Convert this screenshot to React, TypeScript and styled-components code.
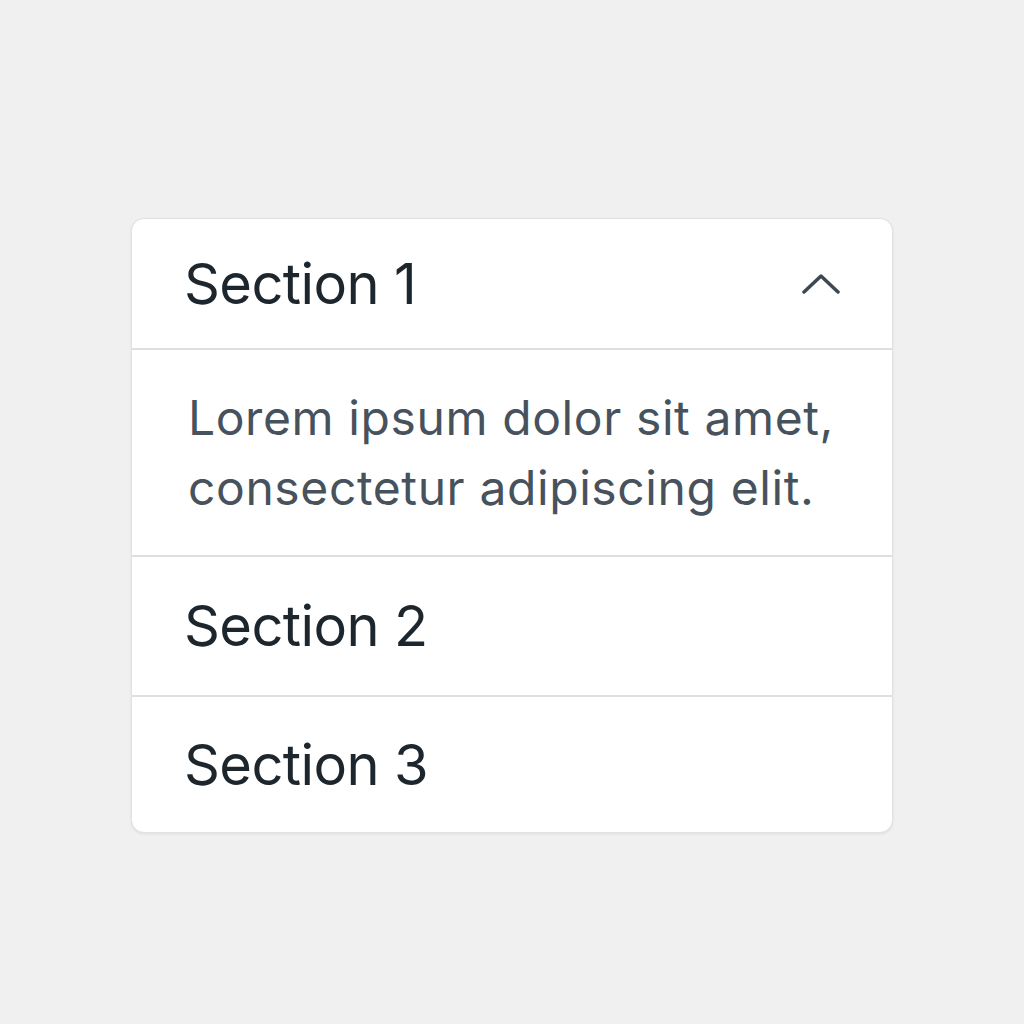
import React from "react";
import styled, { createGlobalStyle } from "styled-components";

const GlobalStyle = createGlobalStyle`
  html, body {
    margin: 0;
    padding: 0;
    background: #f0f0f0;
    font-family: Inter, "Noto Sans", "Liberation Sans", sans-serif;
  }
`;

type Section = { title: string; body?: string; height: number };

const sections: Section[] = [
  {
    title: "Section 1",
    body: "Lorem ipsum dolor sit amet, consectetur adipiscing elit.",
    height: 129,
  },
  { title: "Section 2", height: 138 },
  { title: "Section 3", height: 135 },
];

export default function App() {
  const [open, setOpen] = React.useState(0);

  return (
    <>
      <GlobalStyle />
      <Page>
        <Card>
          {sections.map((s, i) => (
            <Item key={s.title} last={i === sections.length - 1}>
              <Header tall={s.height} onClick={() => setOpen(open === i ? -1 : i)}>
                <Title>{s.title}</Title>
                {open === i && (
                  <svg width="38" height="22" viewBox="0 0 38 22" fill="none">
                    <path
                      d="M2 19 L19 3 L36 19"
                      stroke="#3f4851"
                      strokeWidth="3.5"
                      strokeLinecap="round"
                      strokeLinejoin="round"
                    />
                  </svg>
                )}
              </Header>
              {open === i && s.body && (
                <Panel>
                  <Body>{s.body}</Body>
                </Panel>
              )}
            </Item>
          ))}
        </Card>
      </Page>
    </>
  );
}

const Page = styled.div`
  width: 1024px;
  height: 1024px;
  box-sizing: border-box;
  padding-top: 218px;
  display: flex;
  justify-content: center;
  align-items: flex-start;
`;

const Card = styled.div`
  width: 762px;
  background: #ffffff;
  border-radius: 13px;
  border: 1px solid #e2e2e2;
  box-sizing: border-box;
  box-shadow: 0 1px 3px rgba(0, 0, 0, 0.08);
  overflow: hidden;
`;

const Item = styled.div<{ last: boolean }>`
  border-bottom: ${({ last }) => (last ? "none" : "2px solid #dedfe0")};
`;

const Header = styled.div<{ tall: number }>`
  height: ${({ tall }) => tall}px;
  box-sizing: border-box;
  display: flex;
  align-items: center;
  justify-content: space-between;
  padding: 0 52px;
  cursor: pointer;
`;

const Title = styled.div`
  font-size: 56px;
  font-weight: 400;
  letter-spacing: -0.6px;
  color: #1d252d;
  line-height: 1;
`;

const Panel = styled.div`
  border-top: 2px solid #dedfe0;
  height: 207px;
  box-sizing: border-box;
  padding: 0 30px 0 56px;
  display: flex;
  align-items: center;
`;

const Body = styled.p`
  margin: 0;
  font-size: 48px;
  line-height: 70px;
  color: #47525d;
  letter-spacing: 0.6px;
`;
